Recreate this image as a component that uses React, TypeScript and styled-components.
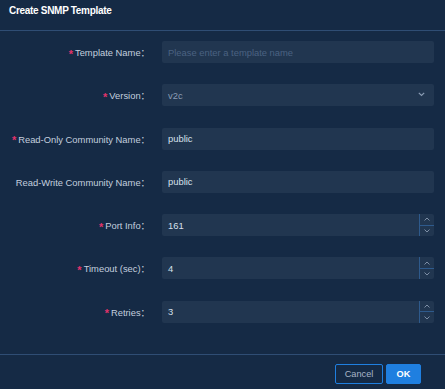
import styled, { createGlobalStyle } from "styled-components";

const GlobalStyle = createGlobalStyle`
  html, body {
    margin: 0;
    padding: 0;
    background: #152a45;
  }
  * {
    box-sizing: border-box;
  }
`;

const Dialog = styled.div`
  width: 445px;
  height: 389px;
  background: #152a45;
  font-family: "Liberation Sans", "Noto Sans CJK SC", Arial, sans-serif;
  display: flex;
  flex-direction: column;
`;

const Header = styled.div`
  height: 31px;
  padding: 4px 9px 0;
  border-bottom: 1px solid #2f4d74;
  color: #ffffff;
  font-size: 10px;
  letter-spacing: -0.3px;
  font-weight: bold;
  line-height: 13px;
`;

const Form = styled.div`
  flex: 1;
  display: grid;
  grid-template-columns: 150px 272px;
  column-gap: 12px;
  row-gap: 21.3px;
  align-content: start;
  padding-top: 10px;
`;

const Label = styled.label`
  display: flex;
  align-items: center;
  justify-content: flex-end;
  height: 22px;
  color: #c3cfdf;
  font-size: 9.4px;
  white-space: nowrap;
`;

const Star = styled.span`
  color: #e2336b;
  font-size: 11px;
  font-weight: bold;
  line-height: 1;
  margin: 4px 2px 0 0;
`;

const Field = styled.div`
  position: relative;
  display: flex;
  align-items: center;
  height: 22px;
  background: #213650;
  border-radius: 2px;
  padding-left: 6px;
  font-size: 9.4px;
  color: #d6e0ec;
`;

const Placeholder = styled.span`
  color: #4b6282;
`;

const Muted = styled.span`
  color: #8a9cb4;
`;

const Chevron = styled.svg`
  position: absolute;
  right: 9px;
  top: 8px;
`;

const Spinner = styled.div`
  position: absolute;
  right: 0;
  top: 0;
  bottom: 0;
  width: 15px;
  border-left: 1px solid #2e5a8c;
  display: flex;
  flex-direction: column;
`;

const SpinButton = styled.div<{ top?: boolean }>`
  flex: 1;
  display: flex;
  align-items: center;
  justify-content: center;
  border-bottom: ${({ top }) => (top ? "1px solid #2e5a8c" : "none")};
`;

const Footer = styled.div`
  height: 35px;
  border-top: 1px solid #2f4d74;
  display: flex;
  justify-content: flex-end;
  align-items: flex-start;
  gap: 3px;
  padding: 9px 24px 0 0;
`;

const Button = styled.button<{ primary?: boolean }>`
  height: 20px;
  width: ${({ primary }) => (primary ? "35px" : "48px")};
  padding: 0;
  border-radius: 2px;
  font-family: inherit;
  font-size: 9.2px;
  border: 1px solid #1f7fe0;
  background: ${({ primary }) => (primary ? "#1f7fe0" : "transparent")};
  color: ${({ primary }) => (primary ? "#ffffff" : "#a9b6c7")};
  font-weight: ${({ primary }) => (primary ? "bold" : "normal")};
`;

const Arrow = ({ up }: { up?: boolean }) => (
  <svg width="6" height="4" viewBox="0 0 6 4">
    <path
      d={up ? "M0.5 3.5 L3 1 L5.5 3.5" : "M0.5 0.5 L3 3 L5.5 0.5"}
      fill="none"
      stroke="#7d8ea5"
      strokeWidth="1"
    />
  </svg>
);

const NumberField = ({ value }: { value: string }) => (
  <Field>
    {value}
    <Spinner>
      <SpinButton top>
        <Arrow up />
      </SpinButton>
      <SpinButton>
        <Arrow />
      </SpinButton>
    </Spinner>
  </Field>
);

const Row = ({ label, required, children }: { label: string; required?: boolean; children: React.ReactNode }) => (
  <>
    <Label>
      {required && <Star>*</Star>}
      {label}：
    </Label>
    {children}
  </>
);

export default function App() {
  return (
    <Dialog>
      <GlobalStyle />
      <Header>Create SNMP Template</Header>
      <Form>
        <Row label="Template Name" required>
          <Field>
            <Placeholder>Please enter a template name</Placeholder>
          </Field>
        </Row>
        <Row label="Version" required>
          <Field>
            <Muted>v2c</Muted>
            <Chevron width="7" height="5" viewBox="0 0 7 5">
              <path d="M0.8 0.8 L3.5 3.5 L6.2 0.8" fill="none" stroke="#8a9cb4" strokeWidth="1.2" />
            </Chevron>
          </Field>
        </Row>
        <Row label="Read-Only Community Name" required>
          <Field>public</Field>
        </Row>
        <Row label="Read-Write Community Name">
          <Field>public</Field>
        </Row>
        <Row label="Port Info" required>
          <NumberField value="161" />
        </Row>
        <Row label="Timeout (sec)" required>
          <NumberField value="4" />
        </Row>
        <Row label="Retries" required>
          <NumberField value="3" />
        </Row>
      </Form>
      <Footer>
        <Button>Cancel</Button>
        <Button primary>OK</Button>
      </Footer>
    </Dialog>
  );
}
